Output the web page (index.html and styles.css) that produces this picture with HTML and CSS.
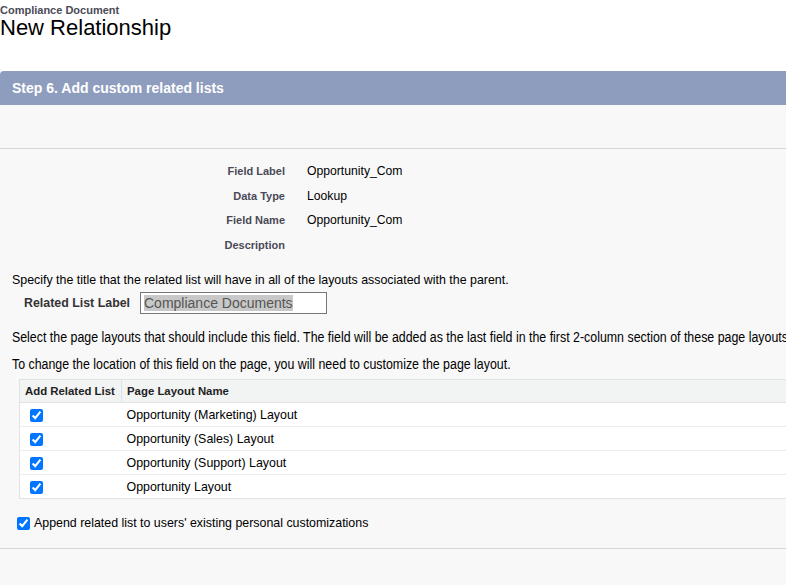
FILE: index.html
```html
<!DOCTYPE html>
<html>
<head>
<meta charset="utf-8">
<link rel="stylesheet" href="styles.css">
</head>
<body>
<div class="page-head">
  <div class="obj-type">Compliance Document</div>
  <h1 class="page-title">New Relationship</h1>
</div>
<div class="step-bar">Step 6. Add custom related lists</div>
<div class="content">
  <div class="top-blank"></div>
  <div class="detail">
    <div class="dl">Field Label</div><div class="dv">Opportunity_Com</div>
    <div class="dl">Data Type</div><div class="dv">Lookup</div>
    <div class="dl">Field Name</div><div class="dv">Opportunity_Com</div>
    <div class="dl">Description</div><div class="dv"></div>
  </div>
  <p class="para first">Specify the title that the related list will have in all of the layouts associated with the parent.</p>
  <div class="label-row">
    <span class="rl-label">Related List Label</span>
    <span class="rl-input"><span class="sel">Compliance Documents</span></span>
  </div>
  <p class="para narrow p2">Select the page layouts that should include this field. The field will be added as the last field in the first 2-column section of these page layouts.</p>
  <p class="para narrow p3">To change the location of this field on the page, you will need to customize the page layout.</p>
  <table class="layouts">
    <thead>
      <tr><th class="c1">Add Related List</th><th>Page Layout Name</th></tr>
    </thead>
    <tbody>
      <tr><td class="c1"><input type="checkbox" checked></td><td>Opportunity (Marketing) Layout</td></tr>
      <tr><td class="c1"><input type="checkbox" checked></td><td>Opportunity (Sales) Layout</td></tr>
      <tr><td class="c1"><input type="checkbox" checked></td><td>Opportunity (Support) Layout</td></tr>
      <tr><td class="c1"><input type="checkbox" checked></td><td>Opportunity Layout</td></tr>
    </tbody>
  </table>
  <label class="append"><input type="checkbox" checked><span>Append related list to users' existing personal customizations</span></label>
  <div class="bottom-rule"></div>
</div>
</body>
</html>
```
FILE: styles.css
```css
html, body {
  margin: 0;
  padding: 0;
  background: #f8f8f8;
  font-family: "Liberation Sans", Arial, sans-serif;
  color: #000;
  overflow: hidden;
}
body { width: 786px; height: 585px; }
.page-head {
  background: #fff;
  padding: 4px 0 0 0;
  height: 71px;
  box-sizing: border-box;
}
.obj-type {
  font-size: 11px;
  font-weight: bold;
  color: #4a4a56;
  line-height: 12px;
}
.page-title {
  margin: 0;
  font-size: 22px;
  font-weight: normal;
  line-height: 24px;
  color: #000;
}
.step-bar {
  background: #8e9dbe;
  color: #fff;
  font-size: 14px;
  font-weight: bold;
  height: 34px;
  line-height: 34px;
  padding-left: 12px;
  border-top-left-radius: 4px;
  width: 800px;
}
.content {
  background: #f8f8f8;
}
.top-blank {
  height: 43px;
  border-bottom: 1px solid #d8d8d8;
  width: 800px;
}
.detail {
  display: grid;
  grid-template-columns: 285px auto;
  column-gap: 22px;
  grid-auto-rows: 24.5px;
  align-items: center;
  padding-top: 10px;
}
.dl {
  text-align: right;
  font-size: 11px;
  font-weight: bold;
  color: #4a4a56;
}
.dv {
  font-size: 12.2px;
  color: #000;
}
.para {
  margin: 0;
  padding-left: 12px;
  font-size: 12.4px;
  white-space: nowrap;
}
.para.first { margin-top: 16px; line-height: 14px; }
.label-row {
  display: flex;
  align-items: center;
  padding-left: 24px;
  margin-top: 5px;
  height: 22px;
}
.rl-label {
  font-size: 12.4px;
  font-weight: bold;
  color: #333;
  width: 116px;
}
.rl-input {
  display: block;
  box-sizing: border-box;
  width: 187px;
  height: 22px;
  border: 1px solid #767676;
  background: #fff;
  padding: 1px 0 0 3px;
  font-size: 14px;
  line-height: 18px;
  color: #555;
}
.sel { background: #c8c8c8; }
.narrow {
  font-size: 14px;
  transform: scaleX(0.885);
  transform-origin: left center;
  padding-left: 13.5px;
}
.p2 { margin-top: 16px; line-height: 14px; }
.p3 { margin-top: 13px; line-height: 14px; }
.layouts {
  margin: 8px 0 0 19px;
  border-collapse: collapse;
  width: 780px;
  background: #fff;
  border: 1px solid #e0e3e5;
  font-size: 12.4px;
}
.layouts th {
  background: #f2f3f3;
  text-align: left;
  font-size: 11.4px;
  font-weight: bold;
  color: #222;
  height: 22px;
  padding: 0 5px;
  border-bottom: 1px solid #e0e3e5;
}
.layouts th.c1 {
  width: 91px;
  border-right: 1px solid #e0e3e5;
}
.layouts td {
  height: 23px;
  padding: 0 5px;
  border-bottom: 1px solid #ececec;
  color: #000;
}
.layouts tbody tr:last-child td { border-bottom: none; }
.layouts td.c1 { padding-left: 10px; }
.layouts input {
  margin: 0;
  width: 13px;
  height: 13px;
  vertical-align: middle;
}
.append {
  display: flex;
  align-items: center;
  margin: 17px 0 0 17px;
  font-size: 12.4px;
  color: #000;
}
.append input {
  margin: 0 4px 0 0;
  width: 13px;
  height: 13px;
}
.bottom-rule {
  margin-top: 18px;
  border-bottom: 1px solid #d8d8d8;
  width: 800px;
}
```
